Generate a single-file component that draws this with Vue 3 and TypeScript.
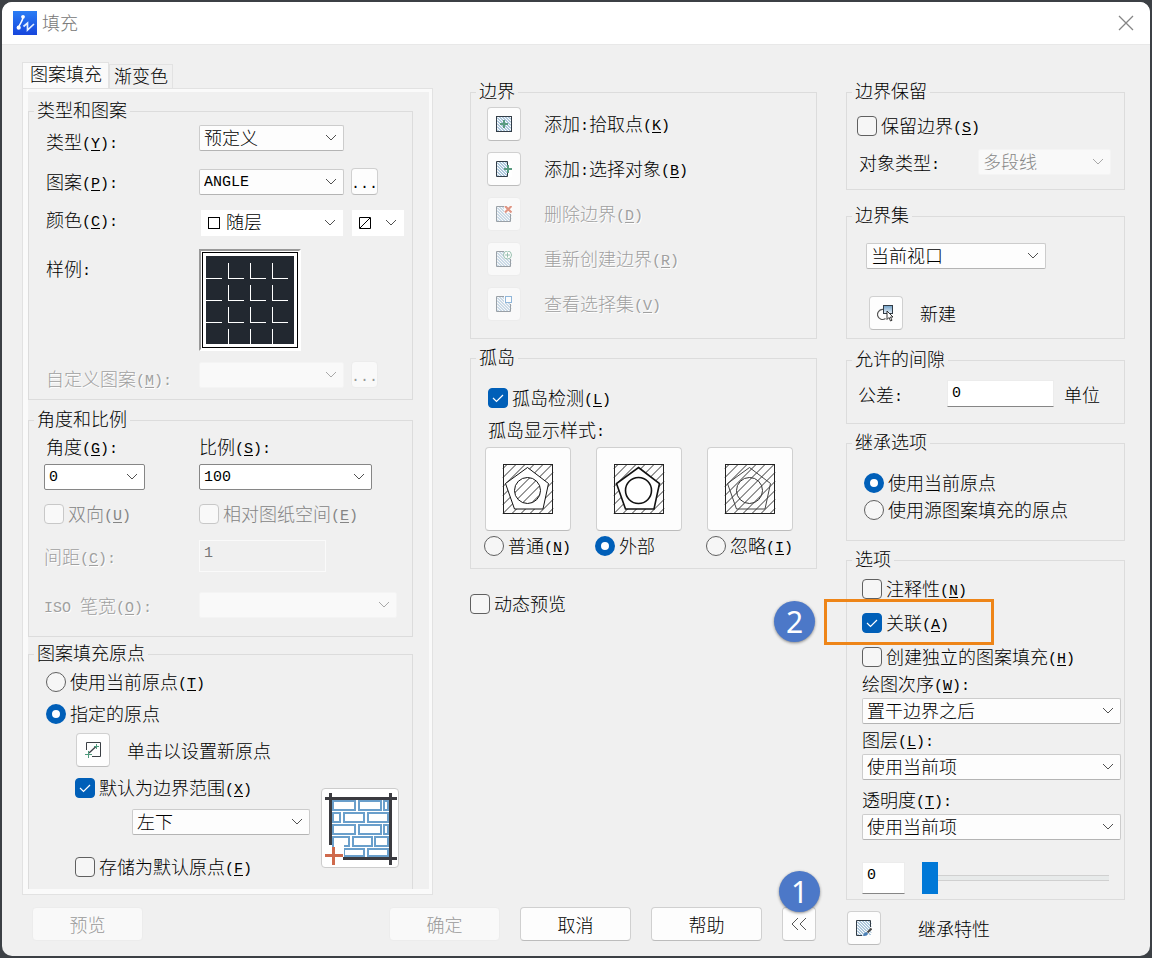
<script setup lang="ts">
import { ref } from 'vue'

interface BoundaryAction {
  id: string
  text: string
  colon?: boolean
  tail?: string
  key: string
  disabled: boolean
}

const boundaryActions: BoundaryAction[] = [
  { id: 'pick', text: '添加', colon: true, tail: '拾取点', key: 'K', disabled: false },
  { id: 'select', text: '添加', colon: true, tail: '选择对象', key: 'B', disabled: false },
  { id: 'remove', text: '删除边界', key: 'D', disabled: true },
  { id: 'recreate', text: '重新创建边界', key: 'R', disabled: true },
  { id: 'view', text: '查看选择集', key: 'V', disabled: true },
]

const islandStyles = [
  { id: 'normal', text: '普通', key: 'N' },
  { id: 'outer', text: '外部', key: '' },
  { id: 'ignore', text: '忽略', key: 'I' },
]

const islandStyle = ref('outer')
const originMode = ref('specified')
const inheritMode = ref('current')
const islandDetect = ref(true)
const dynamicPreview = ref(false)
const useExtents = ref(true)
const storeOrigin = ref(false)
const retainBoundary = ref(false)
const annotative = ref(false)
const associative = ref(true)
const separate = ref(false)
const tolerance = ref('0')
const transparency = ref(0)

/* Diagonal strokes filling a w × h box; falling "\" or rising "/" lines. */
function hatch(x: number, y: number, w: number, h: number, step: number, rising = false): string {
  let d = ''
  for (let c = -h + step / 2; c < w; c += step) {
    const x1 = Math.max(0, c)
    const x2 = Math.min(w, c + h)
    const y1 = x1 - c
    const y2 = x2 - c
    d += rising
      ? `M${x + x1} ${y + h - y1}L${x + x2} ${y + h - y2}`
      : `M${x + x1} ${y + y1}L${x + x2} ${y + y2}`
  }
  return d
}

const smallHatch = hatch(1, 1, 14, 14, 3)
const islandHatch = hatch(0, 0, 50, 50, 9, true)

const angleMarks = (() => {
  let d = ''
  for (let row = 1; row <= 4; row++) {
    for (let col = 0; col <= 3; col++) {
      const px = col * 22 + 0.5
      const py = row * 22 + 0.5
      if (row < 4) d += `M${px - 0.5} ${py}h16`
      if (col > 0) d += `M${px} ${py - 15.5}v15.5`
    }
  }
  return d
})()

const bricks: number[][] = [
  [10, 11, 24, 11], [36, 11, 24, 11], [61, 11, 6, 11],
  [10, 23, 9, 11], [21, 23, 22, 11], [45, 23, 22, 11],
  [10, 35, 24, 11], [36, 35, 24, 11], [61, 35, 6, 11],
  [10, 47, 18, 11], [30, 47, 21, 11], [52, 47, 15, 11],
  [21, 59, 22, 9], [45, 59, 22, 9],
]
</script>

<template>
  <main class="dialog">
    <header class="title-bar">
      <svg class="app-icon" viewBox="0 0 24 24" aria-hidden="true">
        <defs>
          <linearGradient id="brand" x1="0" y1="0" x2="0" y2="1">
            <stop offset="0" stop-color="#2a7df5" />
            <stop offset="1" stop-color="#1746dd" />
          </linearGradient>
        </defs>
        <rect width="24" height="24" fill="url(#brand)" />
        <path d="M10 6C10 10 7 12 5.500 16.500" fill="none" stroke="#fff" stroke-width="1.500" />
        <circle cx="10" cy="5.800" r="1.900" fill="#fff" />
        <circle cx="5.700" cy="16.700" r="2.100" fill="#fff" />
        <path d="M10.500 15.500L14.500 12V19L21 13" fill="none" stroke="#e4efff" stroke-width="1.700" />
      </svg>
      <h1>填充</h1>
      <button class="close" type="button" aria-label="关闭">
        <svg viewBox="0 0 16 16"><path d="M1 1L15 15M15 1L1 15" fill="none" stroke="#858585" stroke-width="1.300" /></svg>
      </button>
    </header>

    <div class="body">
      <div class="left-area">
        <div class="columns">
          <section class="tab-area">
            <div class="tabs" role="tablist">
              <button class="tab active" type="button" role="tab" aria-selected="true">图案填充</button>
              <button class="tab" type="button" role="tab" aria-selected="false">渐变色</button>
            </div>
            <div class="tab-panel">
              <fieldset class="g-type">
                <legend>类型和图案</legend>
                <div class="content">
                  <div class="row low">
                    <label for="type">类型<span class="k">(<u>Y</u>):</span></label>
                    <select id="type" class="w-main"><option>预定义</option></select>
                  </div>
                  <div class="row pattern">
                    <label for="pattern">图案<span class="k">(<u>P</u>):</span></label>
                    <select id="pattern" class="w-main latin"><option>ANGLE</option></select>
                    <button class="more" type="button" aria-label="浏览图案">...</button>
                  </div>
                  <div class="row high color">
                    <label for="color">颜色<span class="k">(<u>C</u>):</span></label>
                    <span class="swatch-field">
                      <svg class="swatch" viewBox="0 0 12 12"><rect x="0.500" y="0.500" width="11" height="11" fill="#fff" stroke="#000" /></svg>
                      <select id="color" class="flat w-color"><option>随层</option></select>
                    </span>
                    <span class="swatch-field">
                      <svg class="swatch" viewBox="0 0 12 12"><path d="M0.500 0.500h11v11h-11zM1 11L11 1" fill="#fff" stroke="#000" /></svg>
                      <select class="flat w-back" aria-label="背景色"><option></option></select>
                    </span>
                  </div>
                  <div class="row sample">
                    <span class="label">样例<span class="k">:</span></span>
                    <button class="preview" type="button" aria-label="ANGLE">
                      <svg viewBox="0 0 88 88"><rect width="88" height="88" fill="#222830" /><path :d="angleMarks" fill="none" stroke="#fff" /></svg>
                    </button>
                  </div>
                  <div class="row low custom">
                    <label class="off" for="custom">自定义图案<span class="k">(<u>M</u>):</span></label>
                    <select id="custom" class="w-main" disabled><option></option></select>
                    <button class="more" type="button" disabled aria-label="浏览自定义图案">...</button>
                  </div>
                </div>
              </fieldset>

              <fieldset class="g-angle">
                <legend>角度和比例</legend>
                <div class="content">
                  <label class="pad" for="angle">角度<span class="k">(<u>G</u>):</span></label>
                  <label for="scale">比例<span class="k">(<u>S</u>):</span></label>
                  <select id="angle" class="editable w-angle latin"><option>0</option></select>
                  <select id="scale" class="editable w-scale latin"><option>100</option></select>
                  <label class="check dim"><input type="checkbox" disabled /><span>双向<span class="k">(<u>U</u>)</span></span></label>
                  <label class="check dim"><input type="checkbox" disabled /><span>相对图纸空间<span class="k">(<u>E</u>)</span></span></label>
                  <label class="off" for="spacing">间距<span class="k">(<u>C</u>):</span></label>
                  <input id="spacing" class="text spacing" type="text" value="1" disabled />
                  <label class="off" for="iso"><span class="k">ISO </span>笔宽<span class="k">(<u>O</u>):</span></label>
                  <select id="iso" class="w-iso" disabled><option></option></select>
                </div>
              </fieldset>

              <fieldset class="g-origin">
                <legend>图案填充原点</legend>
                <div class="content">
                  <label class="check"><input v-model="originMode" type="radio" name="origin" value="current" /><span>使用当前原点<span class="k">(<u>T</u>)</span></span></label>
                  <label class="check specified"><input v-model="originMode" type="radio" name="origin" value="specified" /><span>指定的原点</span></label>
                  <div class="set-origin">
                    <button id="set-origin" class="icon-button" type="button">
                      <svg viewBox="0 0 18 18">
                        <path d="M2.500 9V1.500H16.500V15.500H8" fill="none" stroke="#3a3f44" />
                        <path d="M5 12L12 5.500" fill="none" stroke="#3a3f44" stroke-width="1.300" />
                        <path d="M4.500 10V17M1 13.500H8M12.500 3V8M10 5.500H15" fill="none" stroke="#4e9a7c" />
                      </svg>
                    </button>
                    <label for="set-origin">单击以设置新原点</label>
                  </div>
                  <div class="extents">
                    <div class="extents-fields">
                      <label class="check"><input v-model="useExtents" type="checkbox" /><span>默认为边界范围<span class="k">(<u>X</u>)</span></span></label>
                      <select class="w-corner" aria-label="边界范围位置"><option>左下</option></select>
                      <label class="check"><input v-model="storeOrigin" type="checkbox" /><span>存储为默认原点<span class="k">(<u>F</u>)</span></span></label>
                    </div>
                    <div class="brick-tile">
                      <svg viewBox="0 0 77 79" aria-hidden="true">
                        <rect
                          v-for="(b, i) in bricks"
                          :key="i"
                          :x="b[0] + 1"
                          :y="b[1] + 1"
                          :width="b[2] - 2"
                          :height="b[3] - 2"
                          fill="#fff"
                          stroke="#6a9fcb"
                          stroke-width="2"
                        />
                        <path d="M3 9.500H75M8.500 4V56M68.500 4V76M21 69.500H75" fill="none" stroke="#3b3b40" stroke-width="3" />
                        <rect x="12" y="54" width="10" height="14" fill="#fff" />
                        <path d="M11.500 58V76M3 66.500H21" fill="none" stroke="#cf6a4c" stroke-width="3" />
                      </svg>
                    </div>
                  </div>
                </div>
              </fieldset>
            </div>
          </section>

          <section class="middle">
            <fieldset class="g-boundary">
              <legend>边界</legend>
              <div class="content">
                <div v-for="a in boundaryActions" :key="a.id" class="action">
                  <button :id="a.id" class="icon-button" type="button" :disabled="a.disabled">
                    <svg viewBox="0 0 16 16">
                      <path :d="smallHatch" fill="none" stroke="#5e93bd" />
                      <template v-if="a.id === 'pick'">
                        <rect x="0.500" y="0.500" width="15" height="15" fill="none" stroke="#323c46" />
                        <path d="M8 4V12M4 8H12" fill="none" stroke="#5a9b80" stroke-width="2" />
                      </template>
                      <template v-else-if="a.id === 'select'">
                        <path d="M12 0H16V16H12z" fill="#fff" />
                        <path d="M11.500 5V0.500H0.500V15.500H11.500V11" fill="none" stroke="#323c46" />
                        <path d="M12 4V12M8 8H16" fill="none" stroke="#5a9b80" stroke-width="2" />
                      </template>
                      <template v-else>
                        <path d="M8 0.500H0.500V15.500H14.500V8" fill="none" stroke="#5b6670" />
                        <path d="M8 0H16V7H8z" fill="#fff" />
                        <path v-if="a.id === 'remove'" d="M9 0L15.500 6.500M15.500 0L9 6.500" fill="none" stroke="#cf5336" stroke-width="2.200" />
                        <g v-else-if="a.id === 'recreate'" fill="none" stroke="#5a9b80"><circle cx="11.500" cy="4" r="4" fill="#fff" /><path d="M11.500 1.500V6.500M9 4H14" /></g>
                        <rect v-else x="9.500" y="0.500" width="6" height="6" fill="#fff" stroke="#4b8ac4" />
                      </template>
                    </svg>
                  </button>
                  <label :for="a.id" :class="{ off: a.disabled }">{{ a.text }}<span v-if="a.colon" class="k">:</span>{{ a.tail }}<span class="k">(<u>{{ a.key }}</u>)</span></label>
                </div>
              </div>
            </fieldset>

            <fieldset class="g-island">
              <legend>孤岛</legend>
              <div class="content">
                <label class="check"><input v-model="islandDetect" type="checkbox" /><span>孤岛检测<span class="k">(<u>L</u>)</span></span></label>
                <p>孤岛显示样式<span class="k">:</span></p>
                <div class="styles">
                  <div v-for="s in islandStyles" :key="s.id" class="style">
                    <button class="tile" type="button" :aria-label="s.text" @click="islandStyle = s.id">
                      <svg viewBox="-1 -1 52 52">
                        <path :d="islandHatch" fill="none" stroke="#333" />
                        <rect x="0.500" y="0.500" width="49" height="49" fill="none" stroke="#222" />
                        <path
                          d="M24.500 3.500L45.500 19.500L40 45H11.500L2.500 19.500z"
                          :fill="s.id === 'ignore' ? 'none' : '#fff'"
                          :stroke="s.id === 'ignore' ? '#444' : '#111'"
                          :stroke-width="s.id === 'outer' ? 1.6 : 1"
                        />
                        <template v-if="s.id === 'normal'">
                          <clipPath id="disc"><circle cx="24.500" cy="26.500" r="13" /></clipPath>
                          <path :d="islandHatch" fill="none" stroke="#333" clip-path="url(#disc)" />
                        </template>
                        <circle cx="24.500" cy="26.500" r="13" fill="none" :stroke="s.id === 'ignore' ? '#333' : '#111'" :stroke-width="s.id === 'outer' ? 1.6 : 1" />
                      </svg>
                    </button>
                    <label class="check"><input v-model="islandStyle" type="radio" name="island" :value="s.id" /><span>{{ s.text }}<span v-if="s.key" class="k">(<u>{{ s.key }}</u>)</span></span></label>
                  </div>
                </div>
              </div>
            </fieldset>

            <label class="check dynamic"><input v-model="dynamicPreview" type="checkbox" /><span>动态预览</span></label>
          </section>
        </div>

        <footer class="footer">
          <button class="command preview-command" type="button" disabled>预览</button>
          <button class="command" type="button" disabled>确定</button>
          <button class="command" type="button">取消</button>
          <button class="command" type="button">帮助</button>
          <span class="collapse-wrap">
            <button class="icon-button" type="button" aria-label="收起">
              <svg viewBox="0 0 18 18"><path d="M8 3L2 9L8 15M16 3L10 9L16 15" fill="none" stroke="#555" /></svg>
            </button>
            <span class="badge above">1</span>
          </span>
        </footer>
      </div>

      <section class="right">
        <fieldset class="g-retain">
          <legend>边界保留</legend>
          <div class="content">
            <label class="check"><input v-model="retainBoundary" type="checkbox" /><span>保留边界<span class="k">(<u>S</u>)</span></span></label>
            <div class="line">
              <label for="object-type">对象类型<span class="k">:</span></label>
              <select id="object-type" disabled><option>多段线</option></select>
            </div>
          </div>
        </fieldset>

        <fieldset class="g-set">
          <legend>边界集</legend>
          <div class="content">
            <select aria-label="边界集"><option>当前视口</option></select>
            <div class="line">
              <button id="new-set" class="icon-button" type="button">
                <svg viewBox="0 0 18 18">
                  <defs><linearGradient id="pane" x1="0" y1="0" x2="0" y2="1"><stop offset="0" stop-color="#6f9fc6" /><stop offset="1" stop-color="#e8f0f7" /></linearGradient></defs>
                  <path d="M6 5.500A5 5 0 1 0 8.500 14.500" fill="none" stroke="#555" stroke-width="1.200" />
                  <rect x="6.500" y="1.500" width="9" height="8" fill="url(#pane)" stroke="#323c46" />
                  <path d="M10 7V15.500L12 13.500L13.500 17L15 16.300L13.500 13H16z" fill="#fff" stroke="#222" stroke-width="0.900" />
                </svg>
              </button>
              <label for="new-set">新建</label>
            </div>
          </div>
        </fieldset>

        <fieldset class="g-gap">
          <legend>允许的间隙</legend>
          <div class="content">
            <label for="tolerance">公差<span class="k">:</span></label>
            <input id="tolerance" v-model="tolerance" class="text" type="text" />
            <span>单位</span>
          </div>
        </fieldset>

        <fieldset class="g-inherit">
          <legend>继承选项</legend>
          <div class="content">
            <label class="check"><input v-model="inheritMode" type="radio" name="inherit" value="current" /><span>使用当前原点</span></label>
            <label class="check"><input v-model="inheritMode" type="radio" name="inherit" value="source" /><span>使用源图案填充的原点</span></label>
          </div>
        </fieldset>

        <fieldset class="g-options">
          <legend>选项</legend>
          <div class="content">
            <div class="toggles">
              <label class="check"><input v-model="annotative" type="checkbox" /><span>注释性<span class="k">(<u>N</u>)</span></span></label>
              <div class="marked">
                <label class="check"><input v-model="associative" type="checkbox" /><span>关联<span class="k">(<u>A</u>)</span></span></label>
                <span class="frame"></span>
                <span class="badge beside">2</span>
              </div>
              <label class="check"><input v-model="separate" type="checkbox" /><span>创建独立的图案填充<span class="k">(<u>H</u>)</span></span></label>
            </div>
            <div class="stack">
              <label for="order">绘图次序<span class="k">(<u>W</u>):</span></label>
              <select id="order"><option>置于边界之后</option></select>
              <label for="layer">图层<span class="k">(<u>L</u>):</span></label>
              <select id="layer"><option>使用当前项</option></select>
              <label for="alpha">透明度<span class="k">(<u>T</u>):</span></label>
              <select id="alpha"><option>使用当前项</option></select>
            </div>
            <div class="slider">
              <input v-model="transparency" class="text" type="text" aria-label="透明度数值" />
              <input v-model="transparency" type="range" min="0" max="90" aria-label="透明度" />
            </div>
          </div>
        </fieldset>

        <div class="inherit-props">
          <button id="inherit-props" class="icon-button" type="button">
            <svg viewBox="0 0 16 16">
              <path :d="smallHatch" fill="none" stroke="#5e93bd" />
              <path d="M14.500 7V0.500H0.500V15.500H6" fill="none" stroke="#323c46" />
              <path d="M7 16C8 12 10 12 15 8L16 9.500C12.500 13 12 16 7 16z" fill="#fff" />
              <path d="M15.500 8.500L11.500 12.500" fill="none" stroke="#444" stroke-width="2" />
              <path d="M6 15.500C8 15 8 12 10.500 12L12 13.500C11.500 16 8.500 16.500 6 15.500z" fill="#4a7fb5" />
            </svg>
          </button>
          <label for="inherit-props">继承特性</label>
        </div>
      </section>
    </div>
  </main>
</template>

<style>
html {
  background: #3c4045;
}

body {
  margin: 0;
}

#app {
  box-sizing: border-box;
  min-height: 100vh;
  padding: 2px;
  display: flex;
}
</style>

<style scoped>
* {
  box-sizing: border-box;
}

.dialog,
button,
select,
input {
  font-family: 'Noto Sans CJK SC', sans-serif;
  font-size: 18px;
  font-weight: 300;
  line-height: 18px;
  color: #000;
}

.dialog {
  flex: 1;
  min-width: 0;
  display: flex;
  flex-direction: column;
  overflow: hidden;
  border-radius: 10px;
  background: #f0f0f0;
  white-space: nowrap;
}

.k {
  font-family: 'Liberation Mono', monospace;
  font-size: 15px;
  font-weight: 400;
  line-height: 0;
  vertical-align: 1px;
  white-space: pre;
}

u {
  text-underline-offset: 2px;
}

p {
  margin: 0;
}

button,
select,
input {
  margin: 0;
}

/* Title bar */
.title-bar {
  display: flex;
  align-items: center;
  height: 43px;
  padding: 0 16px 0 11px;
  border-bottom: 1px solid #e8e8e8;
  background: #fff;
}

.app-icon {
  width: 24px;
  height: 24px;
}

h1 {
  margin: 0 auto 0 5px;
  padding-bottom: 2px;
  font-size: 18px;
  font-weight: 300;
  color: #777;
}

.close {
  display: flex;
  padding: 0;
  border: 0;
  background: none;
}

.close svg {
  width: 16px;
  height: 16px;
}

/* Page skeleton */
.body {
  flex: 1;
  display: grid;
  grid-template-columns: minmax(0, 795fr) minmax(0, 279fr);
  column-gap: 29px;
  padding: 17px 25px 10px 20px;
}

.left-area {
  display: flex;
  flex-direction: column;
  gap: 12px;
}

.columns {
  display: grid;
  grid-template-columns: minmax(0, 411fr) minmax(0, 347fr);
  column-gap: 37px;
}

.middle,
.right {
  padding-top: 21px;
}

/* Group boxes */
fieldset {
  min-width: 0;
  margin: 0;
  padding: 0;
  border: 1px solid #dcdcdc;
}

legend {
  height: 18px;
  margin-left: 5px;
  padding: 0 3px;
  line-height: 15px;
}

/* Tabs */
.tabs {
  display: flex;
  align-items: flex-end;
  height: 26px;
}

.tab {
  height: 24px;
  padding: 0 4px 4px;
  border: 1px solid #e2e2e2;
  border-bottom: 0;
  background: #f0f0f0;
}

.tab.active {
  height: 26px;
  padding: 0 6px 6px 7px;
  background: #fafafa;
}

.tab-panel {
  padding: 10px 16px 0 0;
  border: 4px solid #fafafa;
  border-left-width: 6px;
  border-bottom-width: 6px;
  outline: 1px solid #e2e2e2;
  outline-offset: -1px;
  background: #f0f0f0;
}

.tab-panel fieldset + fieldset {
  margin-top: 11px;
}

.tab-panel fieldset + .g-origin {
  margin-top: 8px;
}

/* Fields */
select {
  appearance: none;
  height: 26px;
  padding: 0 24px 2px 4px;
  border: 1px solid #ccc;
  border-bottom-color: #b4b4b4;
  border-radius: 2px;
  background: #fdfdfd url("data:image/svg+xml,%3Csvg xmlns='http://www.w3.org/2000/svg' width='12' height='8'%3E%3Cpath d='M1 1l5 5 5-5' fill='none' stroke='%23505050'/%3E%3C/svg%3E") no-repeat right 6px center;
}

select:disabled {
  border-color: #f4f4f4;
  background-color: #f9f9f9;
  background-image: url("data:image/svg+xml,%3Csvg xmlns='http://www.w3.org/2000/svg' width='12' height='8'%3E%3Cpath d='M1 1l5 5 5-5' fill='none' stroke='%23a8a8a8'/%3E%3C/svg%3E");
  color: #888;
  opacity: 1;
}

select.latin,
.text {
  font-family: 'Liberation Mono', monospace;
  font-size: 15px;
  font-weight: 400;
}

select.latin {
  padding-top: 2px;
  padding-bottom: 0;
}

select.editable {
  border-color: #868686;
  background-color: #fff;
}

.text {
  min-width: 0;
  padding: 0 4px;
  border: 1px solid #ececec;
  border-bottom-color: #868686;
  background: #fff;
}

.text:disabled {
  border-color: #fafafa;
  background: #f0f0f0;
  color: #777;
}

.off {
  color: #a0a0a0;
  text-shadow: 1px 1px 0 #fff;
}

.dim {
  color: #858585;
}

.check {
  display: flex;
  align-items: center;
  gap: 4px;
  height: 20px;
}

.check > span,
.action label {
  padding-bottom: 2px;
}

.check input {
  appearance: none;
  flex: none;
  width: 20px;
  height: 20px;
  border: 1px solid #606060;
  border-radius: 4px;
  background: #f6f6f6;
}

.check input:disabled {
  border-color: #c8c8c8;
  background: #f9f9f9;
}

.check input:checked {
  border-color: #005fb8;
  background: #005fb8 url("data:image/svg+xml,%3Csvg xmlns='http://www.w3.org/2000/svg' width='12' height='10'%3E%3Cpath d='M1 5l3.500 3.500L11 2' fill='none' stroke='%23fff' stroke-width='1.200'/%3E%3C/svg%3E") no-repeat center;
}

.check input[type='radio'] {
  border-radius: 10px;
}

.check input[type='radio']:checked {
  border: 6px solid #005fb8;
  background: #fff;
}

.icon-button,
.more,
.command,
.tile {
  display: flex;
  align-items: center;
  justify-content: center;
  flex: none;
  padding: 0;
  border: 1px solid #d0d0d0;
  border-bottom-color: #bcbcbc;
  border-radius: 4px;
  background: #fdfdfd;
}

.icon-button:disabled,
.more:disabled,
.command:disabled {
  border-color: #ececec;
  background: #f9f9f9;
  color: #999;
}

.icon-button:disabled svg {
  opacity: 0.6;
}

.icon-button {
  width: 34px;
  height: 34px;
}

.icon-button svg {
  width: 16px;
  height: 16px;
}

#set-origin svg,
#new-set svg,
.collapse-wrap svg {
  width: 18px;
  height: 18px;
}

/* Type and pattern */
.g-type .content {
  padding: 5px 0 11px 17px;
}

.row {
  display: flex;
  align-items: center;
}

.row > label,
.row > .label {
  width: 153px;
  padding-bottom: 1px;
}

.row.low {
  align-items: flex-end;
}

.row.high {
  align-items: flex-start;
}

.row.pattern {
  margin-top: 17px;
}

.row.color {
  margin-top: 15px;
}

.row.sample {
  align-items: flex-start;
  margin-top: 13px;
}

.row.sample .label {
  padding-top: 10px;
}

.row.custom {
  margin-top: 10px;
}

.w-main {
  width: 145px;
}

.more {
  width: 27px;
  height: 27px;
  margin-left: 7px;
  padding-top: 6px;
  font-family: 'Liberation Mono', monospace;
  font-size: 15px;
}

.swatch-field {
  display: flex;
  position: relative;
}

.swatch-field + .swatch-field {
  margin-left: 9px;
}

.swatch-field:nth-of-type(1) {
  margin-left: 2px;
}

.swatch {
  position: absolute;
  top: 7px;
  left: 7px;
  width: 12px;
  height: 12px;
}

select.flat {
  padding-bottom: 4px;
  padding-left: 24px;
  border-color: #fff;
  border-radius: 0;
  background-color: #fff;
}

.w-color {
  width: 142px;
}

.w-back {
  width: 52px;
}

.preview {
  padding: 1px;
  border: 2px solid #fff;
  border-top-color: #999;
  border-left-color: #999;
  background: #fff;
}

.preview svg {
  display: block;
  width: 96px;
  height: 96px;
  padding: 3px;
  border: 1px solid #000;
}

/* Angle and scale */
.g-angle .content {
  display: grid;
  grid-template-columns: 155px 1fr;
  grid-template-rows: 16px 46px 28px 56px 42px;
  align-items: center;
  justify-items: start;
  padding: 9px 0 10px 15px;
}

.g-angle .pad {
  padding-left: 2px;
}

.w-angle {
  width: 101px;
}

.w-scale {
  width: 173px;
}

.spacing {
  width: 127px;
  height: 32px;
  padding-bottom: 6px;
}

.w-iso {
  width: 198px;
}

/* Hatch origin */
.g-origin {
  border-bottom: 0;
}

.g-origin .content {
  padding: 9px 13px 12px 17px;
}

.specified {
  margin-top: 12px;
}

.set-origin {
  display: flex;
  align-items: center;
  gap: 17px;
  margin: 9px 0 11px 30px;
}

.extents {
  display: flex;
  align-items: center;
  justify-content: space-between;
  padding-left: 29px;
}

.w-corner {
  display: block;
  width: 178px;
  margin: 11px 0 22px 57px;
}

.brick-tile {
  width: 78px;
  height: 80px;
  border: 1px solid #ccc;
  border-radius: 4px;
  background: #fff;
}

.brick-tile svg {
  display: block;
  width: 77px;
  height: 79px;
}

/* Boundaries */
.g-boundary .content {
  display: flex;
  flex-direction: column;
  gap: 11px;
  padding: 6px 16px 17px;
}

.action {
  display: flex;
  align-items: center;
  gap: 23px;
}

/* Islands */
.g-island {
  margin-top: 10px;
}

.g-island .content {
  padding: 21px 0 12px 13px;
}

.g-island .content > .check {
  margin-left: 4px;
}

.g-island p {
  margin: 12px 0 9px 4px;
}

.styles {
  display: grid;
  grid-template-columns: repeat(3, 111px);
}

.tile {
  width: 86px;
  height: 84px;
  margin: 0 0 5px 1px;
}

.tile svg {
  width: 52px;
  height: 52px;
}

.dynamic {
  margin-top: 25px;
}

/* Bottom commands */
.footer {
  display: flex;
  gap: 20px;
  padding: 0 1px 0 10px;
}

.command {
  width: 111px;
  height: 34px;
}

.preview-command {
  margin-right: auto;
}

.collapse-wrap {
  position: relative;
}

.badge {
  display: flex;
  align-items: center;
  justify-content: center;
  position: absolute;
  width: 41px;
  height: 41px;
  border-radius: 50%;
  background: #4c78c8;
  box-shadow: 0 1px 3px rgb(0 0 0 / 45%);
  font-family: 'Noto Sans', sans-serif;
  font-size: 30px;
  font-weight: 400;
  color: #fff;
}

.badge.above {
  top: -36px;
  left: -3px;
}

.badge.beside {
  top: -12px;
  left: -88px;
}

/* Right column */
.g-retain .content {
  padding: 15px 13px 14px 10px;
}

.line {
  display: flex;
  align-items: center;
}

.g-retain .line {
  justify-content: space-between;
  margin-top: 13px;
  padding-left: 2px;
}

.g-retain select {
  width: 133px;
}

.g-set {
  margin-top: 17px;
}

.g-set .content {
  padding: 18px 19px 8px;
}

.g-set select {
  display: block;
  width: 180px;
}

.g-set .line {
  gap: 17px;
  margin-top: 27px;
  padding-left: 3px;
}

.g-gap {
  margin-top: 12px;
}

.g-gap .content {
  display: flex;
  align-items: center;
  padding: 11px 24px 16px 11px;
}

.g-gap .text {
  flex: none;
  width: 107px;
  height: 27px;
  margin: 0 10px 0 auto;
}

.g-inherit {
  margin-top: 10px;
}

.g-inherit .content {
  display: flex;
  flex-direction: column;
  gap: 7px;
  padding: 21px 17px 20px;
}

.g-options {
  margin-top: 10px;
}

.g-options .content {
  padding: 10px 3px 4px 15px;
}

.toggles {
  display: flex;
  flex-direction: column;
  gap: 14px;
}

.marked {
  position: relative;
}

.frame {
  position: absolute;
  top: -14px;
  left: -38px;
  width: 170px;
  height: 46px;
  border: 3px solid #ee8518;
  pointer-events: none;
}

.stack {
  display: flex;
  flex-direction: column;
  gap: 6px;
  margin-top: 7px;
}

.stack label:last-of-type {
  margin-top: 4px;
}

.slider {
  display: flex;
  align-items: center;
  gap: 17px;
  margin-top: 21px;
  padding-right: 12px;
}

.slider .text {
  width: 43px;
  height: 32px;
  padding-bottom: 6px;
}

input[type='range'] {
  appearance: none;
  flex: 1;
  min-width: 0;
  height: 34px;
  background: linear-gradient(#e7eaea, #e7eaea) no-repeat center / 100% 4px, linear-gradient(#d0d0d0, #d0d0d0) no-repeat center / 100% 6px;
}

input[type='range']::-webkit-slider-thumb {
  appearance: none;
  width: 16px;
  height: 32px;
  background: #0078d7;
}

.inherit-props {
  display: flex;
  align-items: center;
  gap: 37px;
  margin-top: 11px;
  padding-left: 1px;
}
</style>
